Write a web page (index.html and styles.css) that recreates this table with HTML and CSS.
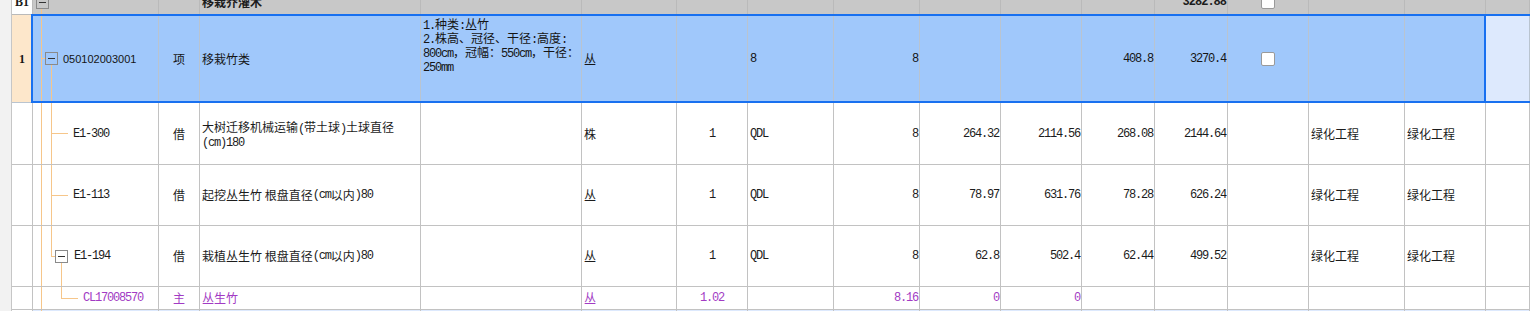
FILE: index.html
```html
<!DOCTYPE html>
<html lang="zh-CN">
<head>
<meta charset="utf-8">
<title>清单</title>
<link rel="stylesheet" href="styles.css">
</head>
<body>
<div class="sheet">
  <div class="row r-head">
    <div class="cell strip"></div>
    <div class="cell num num-head">B1</div>
    <div class="cell tree t0"><span class="box"></span></div>
    <div class="cell"></div>
    <div class="cell bold">移栽乔灌木</div>
    <div class="cell"></div>
    <div class="cell"></div>
    <div class="cell"></div>
    <div class="cell"></div>
    <div class="cell"></div>
    <div class="cell"></div>
    <div class="cell"></div>
    <div class="cell"></div>
    <div class="cell n bold">3282.88</div>
    <div class="cell center"><span class="chk"></span></div>
    <div class="cell"></div>
    <div class="cell"></div>
    <div class="cell"></div>
  </div>

  <div class="row r1 sel">
    <div class="cell strip"></div>
    <div class="cell num num-sel">1</div>
    <div class="cell tree t1"><span class="box"></span><span class="code">050102003001</span></div>
    <div class="cell center">项</div>
    <div class="cell">移栽竹类</div>
    <div class="cell desc">
      <div class="ln"><span class="m">1.</span>种类<span class="m">:</span>丛竹</div>
      <div class="ln"><span class="m">2.</span>株高、冠径、干径<span class="m">:</span>高度<span class="m">:</span></div>
      <div class="ln"><span class="m">800cm</span>，冠幅：<span class="m">550cm</span>，干径：</div>
      <div class="ln"><span class="m">250mm</span></div>
    </div>
    <div class="cell">丛</div>
    <div class="cell"></div>
    <div class="cell m">8</div>
    <div class="cell n">8</div>
    <div class="cell"></div>
    <div class="cell"></div>
    <div class="cell n">408.8</div>
    <div class="cell n">3270.4</div>
    <div class="cell center"><span class="chk"></span></div>
    <div class="cell"></div>
    <div class="cell sel-end"></div>
    <div class="cell after-sel"></div>
  </div>

  <div class="row r2">
    <div class="cell strip"></div>
    <div class="cell num"></div>
    <div class="cell tree t2"><span class="m">E1-300</span></div>
    <div class="cell center">借</div>
    <div class="cell"><div class="two"><div class="ln">大树迁移机械运输<span class="m">(</span>带土球<span class="m">)</span>土球直径</div><div class="ln"><span class="m">(cm)180</span></div></div></div>
    <div class="cell"></div>
    <div class="cell">株</div>
    <div class="cell center m">1</div>
    <div class="cell m">QDL</div>
    <div class="cell n">8</div>
    <div class="cell n">264.32</div>
    <div class="cell n">2114.56</div>
    <div class="cell n">268.08</div>
    <div class="cell n">2144.64</div>
    <div class="cell"></div>
    <div class="cell">绿化工程</div>
    <div class="cell">绿化工程</div>
    <div class="cell"></div>
  </div>

  <div class="row r3">
    <div class="cell strip"></div>
    <div class="cell num"></div>
    <div class="cell tree t2"><span class="m">E1-113</span></div>
    <div class="cell center">借</div>
    <div class="cell">起挖丛生竹 根盘直径<span class="m">(cm</span>以内<span class="m">)80</span></div>
    <div class="cell"></div>
    <div class="cell">丛</div>
    <div class="cell center m">1</div>
    <div class="cell m">QDL</div>
    <div class="cell n">8</div>
    <div class="cell n">78.97</div>
    <div class="cell n">631.76</div>
    <div class="cell n">78.28</div>
    <div class="cell n">626.24</div>
    <div class="cell"></div>
    <div class="cell">绿化工程</div>
    <div class="cell">绿化工程</div>
    <div class="cell"></div>
  </div>

  <div class="row r3">
    <div class="cell strip"></div>
    <div class="cell num"></div>
    <div class="cell tree t4"><span class="box"></span><span class="m gap">E1-194</span></div>
    <div class="cell center">借</div>
    <div class="cell">栽植丛生竹 根盘直径<span class="m">(cm</span>以内<span class="m">)80</span></div>
    <div class="cell"></div>
    <div class="cell">丛</div>
    <div class="cell center m">1</div>
    <div class="cell m">QDL</div>
    <div class="cell n">8</div>
    <div class="cell n">62.8</div>
    <div class="cell n">502.4</div>
    <div class="cell n">62.44</div>
    <div class="cell n">499.52</div>
    <div class="cell"></div>
    <div class="cell">绿化工程</div>
    <div class="cell">绿化工程</div>
    <div class="cell"></div>
  </div>

  <div class="row r5 purple">
    <div class="cell strip"></div>
    <div class="cell num"></div>
    <div class="cell tree t5"><span class="m">CL17008570</span></div>
    <div class="cell center">主</div>
    <div class="cell">丛生竹</div>
    <div class="cell"></div>
    <div class="cell">丛</div>
    <div class="cell center m">1.02</div>
    <div class="cell"></div>
    <div class="cell n">8.16</div>
    <div class="cell n">0</div>
    <div class="cell n">0</div>
    <div class="cell"></div>
    <div class="cell"></div>
    <div class="cell"></div>
    <div class="cell"></div>
    <div class="cell"></div>
    <div class="cell"></div>
  </div>

  <div class="row r6 next">
    <div class="cell strip"></div>
    <div class="cell num"></div>
    <div class="cell tree t6"></div>
    <div class="cell"></div>
    <div class="cell"></div>
    <div class="cell"></div>
    <div class="cell"></div>
    <div class="cell"></div>
    <div class="cell"></div>
    <div class="cell"></div>
    <div class="cell"></div>
    <div class="cell"></div>
    <div class="cell"></div>
    <div class="cell"></div>
    <div class="cell"></div>
    <div class="cell"></div>
    <div class="cell"></div>
    <div class="cell"></div>
  </div>
</div>
</body>
</html>
```

FILE: styles.css
```css
* {
  box-sizing: border-box;
  margin: 0;
  padding: 0;
}

html, body {
  width: 1530px;
  height: 311px;
  overflow: hidden;
  background: #ffffff;
}

body {
  font-family: "Noto Sans CJK SC", "Noto Sans", sans-serif;
  font-size: 12px;
  color: #1c1c1c;
}

.sheet {
  margin-top: -10px;
}

.row {
  display: grid;
  grid-template-columns: 12px 21px 126px 41px 221px 161px 95px 71px 86px 86px 81px 81px 73px 73px 81px 96px 81px 1fr;
}

.r-head { height: 25px; }
.r1 { height: 88px; position: relative; }
.r2 { height: 62px; }
.r3 { height: 61px; }
.r5 { height: 23px; }
.r6 { height: 20px; }

.cell {
  display: flex;
  align-items: center;
  padding: 0 2px;
  border-right: 1px solid #c2c2c2;
  border-bottom: 1px solid #c2c2c2;
  white-space: nowrap;
  overflow: hidden;
  line-height: 14px;
}

.cell.center { justify-content: center; }
.cell.n {
  justify-content: flex-end;
  padding-right: 1px;
}

.m, .cell.n {
  font-family: "Liberation Mono", monospace;
  font-size: 12px;
  letter-spacing: -1.2px;
  line-height: 14px;
}

.ln {
  height: 14px;
  line-height: 14px;
  white-space: nowrap;
}

.bold { font-weight: bold; }

.strip {
  background: #f2f2f2;
  border-bottom: none;
  border-right: 1px solid #c6c6c6;
  padding: 0;
}

.num {
  justify-content: center;
  padding: 0;
  font-family: "Liberation Serif", serif;
  font-weight: bold;
  font-size: 12px;
}

/* header band */
.r-head .cell {
  background: #c8c8c8;
  border-right-color: #bababa;
  border-bottom-color: #bababa;
}
.r-head .strip { background: #f2f2f2; border-right-color: #c6c6c6; }
.r-head .num-head { background: #ffffff; }
.r-head .cell.n { font-weight: bold; letter-spacing: -1px; }

/* selected row */
.sel .cell {
  background-color: #a0c8fb;
  border-right-color: #b9c4d0;
  border-bottom-color: #b9c4d0;
  color: #151515;
}
.sel .strip { background: #f2f2f2; border-right-color: #c6c6c6; }
.sel .num-sel { background: #fde7cb; }
.sel .sel-end { border-right: 2px solid #1870f0; }
.sel .after-sel { background-color: #dde9fd; }
.r1::after {
  content: "";
  position: absolute;
  left: 31px;
  right: 0;
  top: -1px;
  bottom: 0;
  border-top: 2px solid #1870f0;
  border-bottom: 2px solid #1870f0;
  border-left: 2px solid #1870f0;
  pointer-events: none;
}

.desc {
  align-items: flex-start;
  flex-direction: column;
  justify-content: flex-start;
  padding-top: 2px;
}

.code {
  font-family: "Liberation Sans", sans-serif;
  font-size: 11px;
  margin-left: 5px;
}

/* tree column */
.box {
  display: inline-block;
  flex: none;
  width: 13px;
  height: 13px;
  border: 1px solid #8a8a8a;
  background: linear-gradient(#333333, #333333) center / 7px 1px no-repeat;
}
.gap { margin-left: 6px; }

.r-head .t0 {
  padding-left: 3px;
  background:
    linear-gradient(#f6c68a, #f6c68a) 8px 100% / 1px calc(50% - 6px) no-repeat,
    #c8c8c8;
}

.t1 { padding-left: 12px; }
.sel .t1 {
  background:
    linear-gradient(#f6c68a, #f6c68a) 8px 0 / 1px 100% no-repeat,
    linear-gradient(#f6c68a, #f6c68a) 8px 50% / 5px 1px no-repeat,
    linear-gradient(#f6c68a, #f6c68a) 18px 100% / 1px calc(50% - 6px) no-repeat,
    #a0c8fb;
}

.t2 {
  padding-left: 40px;
  background:
    linear-gradient(#f6c68a, #f6c68a) 8px 0 / 1px 100% no-repeat,
    linear-gradient(#f6c68a, #f6c68a) 18px 0 / 1px 100% no-repeat,
    linear-gradient(#f6c68a, #f6c68a) 18px 50% / 17px 1px no-repeat;
}

.t4 {
  padding-left: 22px;
  background:
    linear-gradient(#f6c68a, #f6c68a) 8px 0 / 1px 100% no-repeat,
    linear-gradient(#f6c68a, #f6c68a) 18px 0 / 1px 50% no-repeat,
    linear-gradient(#f6c68a, #f6c68a) 18px 50% / 4px 1px no-repeat,
    linear-gradient(#f6c68a, #f6c68a) 28px 100% / 1px calc(50% - 6px) no-repeat;
}

.t5 {
  padding-left: 50px;
  background:
    linear-gradient(#f6c68a, #f6c68a) 8px 0 / 1px 100% no-repeat,
    linear-gradient(#f6c68a, #f6c68a) 28px 0 / 1px 50% no-repeat,
    linear-gradient(#f6c68a, #f6c68a) 28px 50% / 17px 1px no-repeat;
}

.purple .cell { color: #a23bc4; }

.next .cell { background: #dde9fd; }
.next .strip { background: #f2f2f2; }
.next .num { background: #ffffff; }
.next .t6 {
  background:
    linear-gradient(#f6c68a, #f6c68a) 8px 0 / 1px 100% no-repeat,
    #dde9fd;
}

.chk {
  display: inline-block;
  width: 14px;
  height: 14px;
  background: #ffffff;
  border: 1px solid #9a9a9a;
  border-radius: 2px;
}
```
